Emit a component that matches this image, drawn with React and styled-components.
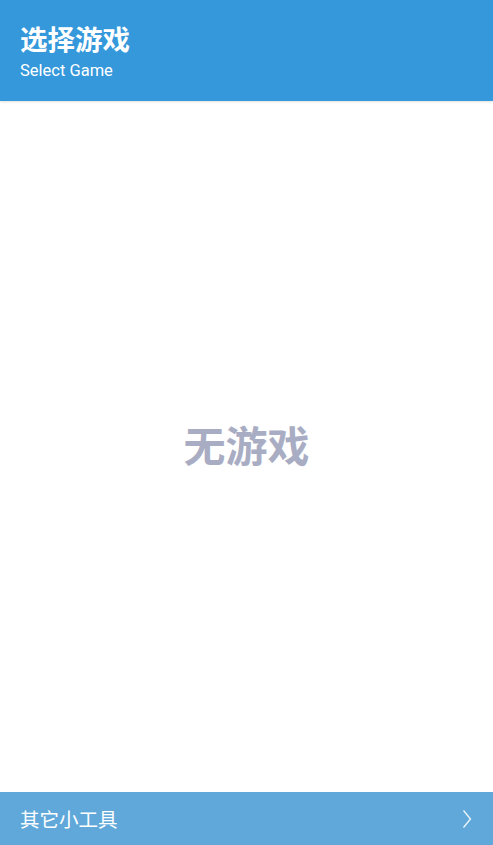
import React from "react";
import styled, { createGlobalStyle } from "styled-components";

const Global = createGlobalStyle`
  html, body { margin: 0; padding: 0; height: 100%; }
  body { font-family: Roboto, "Noto Sans CJK SC", sans-serif; background: #fff; }
  #root { height: 100%; }
`;

const Page = styled.div`
  height: 845px;
  display: flex;
  flex-direction: column;
`;

const Header = styled.header`
  background: #3498db;
  height: 101px;
  box-sizing: border-box;
  padding: 19px 20px 0;
  display: flex;
  flex-direction: column;
  color: #fff;
  box-shadow: 0 1px 2px rgba(0,0,0,0.12);
`;

const Title = styled.h1`
  margin: 0;
  font-size: 27.5px;
  line-height: 38px;
  font-weight: 700;
  font-family: "Noto Sans CJK SC", sans-serif;
`;

const Subtitle = styled.div`
  font-size: 16.5px;
  line-height: 22px;
  margin-top: 3px;
  font-family: Roboto, sans-serif;
`;

const Body = styled.main`
  flex: 1;
  display: flex;
  align-items: center;
  justify-content: center;
  padding-bottom: 6px;
`;

const Empty = styled.div`
  font-family: "Noto Sans CJK SC", sans-serif;
  font-weight: 600;
  font-size: 42px;
  color: #a9adc3;
`;

const Footer = styled.footer`
  height: 53px;
  background: #5fa8d9;
  display: flex;
  align-items: center;
  justify-content: space-between;
  padding: 0 21px 0 20px;
  color: #fff;
`;

const FooterText = styled.span`
  font-family: "Noto Sans CJK SC", sans-serif;
  font-size: 19.5px;
`;

export default function App() {
  return (
    <>
      <Global />
      <Page>
        <Header>
          <Title>选择游戏</Title>
          <Subtitle>Select Game</Subtitle>
        </Header>
        <Body>
          <Empty>无游戏</Empty>
        </Body>
        <Footer>
          <FooterText>其它小工具</FooterText>
          <svg width="10" height="20" viewBox="0 0 10 20" fill="none">
            <path d="M1.5 1.5 L8.5 10 L1.5 18.5" stroke="#fff" strokeWidth="1.3" opacity="0.9" />
          </svg>
        </Footer>
      </Page>
    </>
  );
}
